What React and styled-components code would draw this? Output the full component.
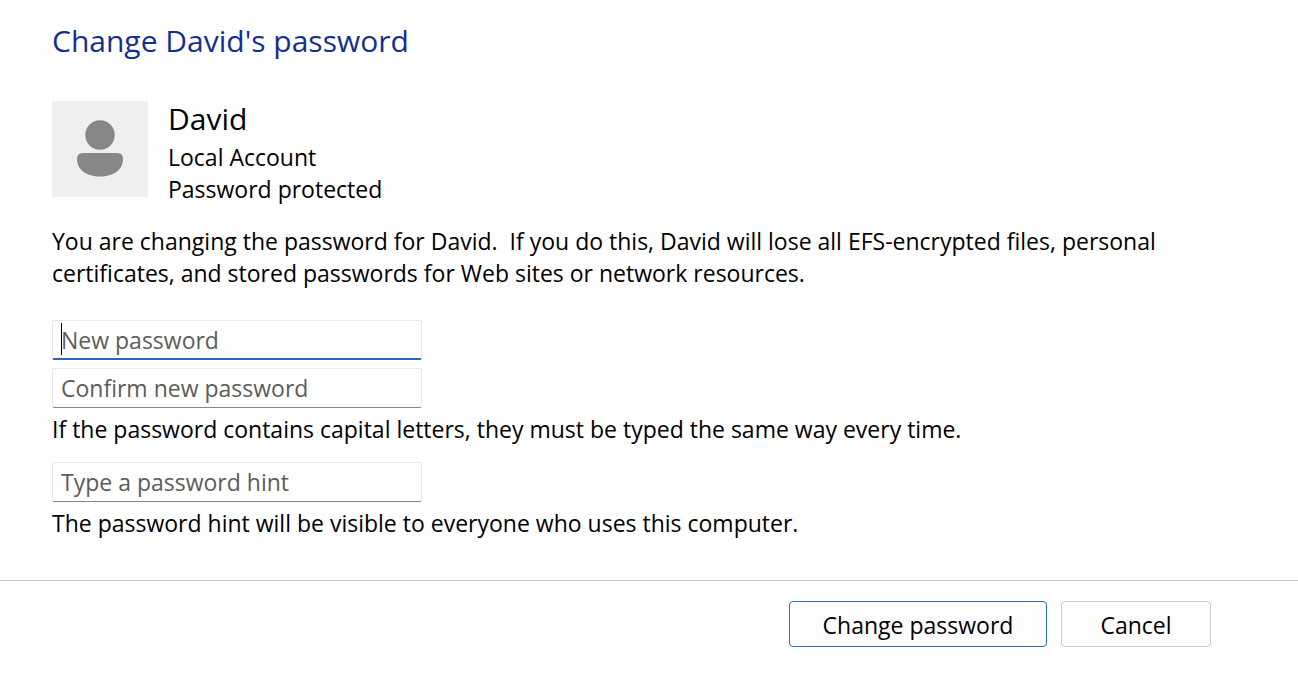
import React from "react";
import styled, { createGlobalStyle } from "styled-components";

const GlobalStyle = createGlobalStyle`
  * {
    box-sizing: border-box;
  }

  body {
    margin: 0;
    background: #ffffff;
    color: #000000;
    font-family: "Segoe UI", "Open Sans", sans-serif;
    font-size: 23px;
    line-height: 32px;
  }
`;

const Page = styled.main`
  display: flex;
  flex-direction: column;
`;

const Content = styled.div`
  display: flex;
  flex-direction: column;
  align-items: flex-start;
  padding: 20px 52px 41px;
`;

const Title = styled.h1`
  margin: 0 0 40px;
  color: #14308f;
  font-size: 30px;
  font-weight: 400;
  line-height: 41px;
`;

const Account = styled.section`
  display: flex;
  gap: 20px;
`;

const Avatar = styled.svg`
  width: 96px;
  height: 96px;
  flex: none;
  background: #efefef;
`;

const AccountName = styled.h2`
  margin: 0 0 4px;
  font-size: 30px;
  font-weight: 400;
  line-height: 36px;
`;

const AccountDetail = styled.div``;

const Warning = styled.p`
  margin: 20px 0 31px;
  max-width: 1140px;
  white-space: pre-wrap;
`;

const Fields = styled.div`
  display: flex;
  flex-direction: column;
  align-items: flex-start;
  gap: 8px;
  margin-bottom: ${({ $spaced }) => ($spaced ? "17px" : "0")};
`;

const FieldBox = styled.div`
  position: relative;
  width: 370px;
  max-width: 100%;
`;

const Field = styled.input`
  display: block;
  width: 100%;
  height: 40px;
  padding: 0 8px;
  border: 1px solid #e8e8e8;
  border-bottom: 1px solid #868686;
  border-radius: 2px;
  background: #ffffff;
  color: #000000;
  font: inherit;
  outline: none;
  caret-color: transparent;

  &::placeholder {
    color: #5c5c5c;
    opacity: 1;
  }

  &:focus {
    border-bottom: 2px solid #2b66b8;
  }
`;

const Caret = styled.span`
  position: absolute;
  top: 3px;
  left: 9px;
  width: 1px;
  height: 32px;
  background: #000000;
`;

const Note = styled.p`
  margin: 0;
  margin-top: -3px;
`;

const Footer = styled.footer`
  display: flex;
  justify-content: flex-end;
  gap: 14px;
  padding: 20px 87px 29px 52px;
  border-top: 1px solid #cccccc;
`;

const Button = styled.button`
  width: ${({ $wide }) => ($wide ? "258px" : "150px")};
  height: 46px;
  padding: 2px 0 0;
  border: 1px solid ${({ $primary }) => ($primary ? "#2b70c9" : "#cccccc")};
  border-radius: 4px;
  background: #fdfdfd;
  color: #000000;
  font: inherit;
`;

export default function App() {
  return (
    <>
      <GlobalStyle />
      <Page>
        <Content>
          <Title>Change David's password</Title>
          <Account>
            <Avatar viewBox="0 0 96 96" aria-hidden="true">
              <circle cx="48" cy="34" r="14.7" fill="#878787" />
              <path
                d="M31 52H65Q71 52 71 58C71 69 61 75.5 48 75.5S25 69 25 58Q25 52 31 52Z"
                fill="#878787"
              />
            </Avatar>
            <div>
              <AccountName>David</AccountName>
              <AccountDetail>Local Account</AccountDetail>
              <AccountDetail>Password protected</AccountDetail>
            </div>
          </Account>
          <Warning>
            {"You are changing the password for David.  If you do this, David will lose all EFS-encrypted files, personal certificates, and stored passwords for Web sites or network resources."}
          </Warning>
          <Fields $spaced>
            <FieldBox>
              <Field type="password" placeholder="New password" aria-label="New password" autoFocus />
              <Caret />
            </FieldBox>
            <FieldBox>
              <Field type="password" placeholder="Confirm new password" aria-label="Confirm new password" />
            </FieldBox>
            <Note>If the password contains capital letters, they must be typed the same way every time.</Note>
          </Fields>
          <Fields>
            <FieldBox>
              <Field type="text" placeholder="Type a password hint" aria-label="Type a password hint" />
            </FieldBox>
            <Note>The password hint will be visible to everyone who uses this computer.</Note>
          </Fields>
        </Content>
        <Footer>
          <Button type="button" $wide $primary>Change password</Button>
          <Button type="button">Cancel</Button>
        </Footer>
      </Page>
    </>
  );
}
